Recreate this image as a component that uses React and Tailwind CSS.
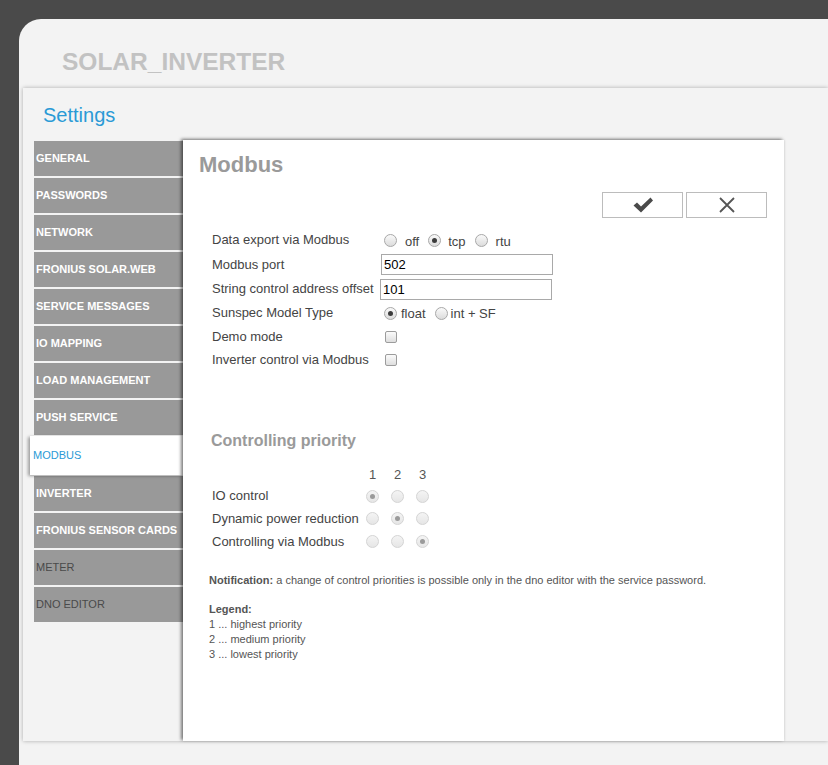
import React from 'react';

const menu = [
  { label: 'GENERAL' },
  { label: 'PASSWORDS' },
  { label: 'NETWORK' },
  { label: 'FRONIUS SOLAR.WEB' },
  { label: 'SERVICE MESSAGES' },
  { label: 'IO MAPPING' },
  { label: 'LOAD MANAGEMENT' },
  { label: 'PUSH SERVICE' },
  { label: 'MODBUS', active: true },
  { label: 'INVERTER' },
  { label: 'FRONIUS SENSOR CARDS' },
  { label: 'METER', plain: true },
  { label: 'DNO EDITOR', plain: true },
];

const Radio = ({ checked, disabled, className = '' }) => (
  <span
    className={`inline-flex items-center justify-center w-[13px] h-[13px] rounded-full border shrink-0 ${
      disabled
        ? 'border-[#d4d4d4] bg-gradient-to-b from-[#f4f4f4] to-[#e6e6e6]'
        : 'border-[#a8a8a8] bg-gradient-to-b from-[#fafafa] to-[#dcdcdc]'
    } ${className}`}
  >
    {checked && (
      <span className={`w-[5px] h-[5px] rounded-full ${disabled ? 'bg-[#9a9a9a]' : 'bg-[#3c3c3c]'}`} />
    )}
  </span>
);

const Checkbox = () => (
  <span className="inline-block w-[12px] h-[12px] ml-[5px] rounded-[2px] border border-[#9c9c9c] bg-gradient-to-b from-[#fbfbfb] to-[#dedede]" />
);

const Row = ({ label, h, children }) => (
  <div className={`flex items-center ${h}`}>
    <div className="w-[168px] shrink-0">{label}</div>
    <div className="flex items-center">{children}</div>
  </div>
);

const PrioRow = ({ label, sel, h }) => (
  <div className={`flex items-center ${h}`}>
    <div className="w-[148px] shrink-0">{label}</div>
    {[1, 2, 3].map((n) => (
      <div key={n} className="w-[25px] flex justify-center">
        <Radio disabled checked={n === sel} />
      </div>
    ))}
  </div>
);

export default function App() {
  return (
    <div
      className="h-[765px] overflow-hidden bg-[#4a4a4a] pl-[19px] pt-[19px]"
      style={{ fontFamily: '"Liberation Sans", Arial, sans-serif' }}
    >
      <div className="h-full bg-[#f3f3f3] rounded-tl-[22px]">
        {/* header */}
        <div className="h-[69px] pt-[29px] pl-[43px]">
          <div className="text-[24.5px] leading-[28px] font-bold text-[#c2c2c2]">SOLAR_INVERTER</div>
        </div>

        {/* main panel */}
        <div className="ml-[4px] h-[653px] bg-[#f3f3f3] shadow-[0_0_4px_rgba(0,0,0,0.3)] pt-[15px]">
          <div className="pl-[20px] text-[20px] leading-[24px] text-[#2a9ad6]">Settings</div>

          <div className="flex mt-[13px] pl-[11px]">
            {/* sidebar */}
            <div className="w-[149px] shrink-0 pt-[1px] flex flex-col">
              {menu.map((m) =>
                m.active ? (
                  <div
                    key={m.label}
                    className="h-[39px] -ml-[4px] -mt-[1px] mb-[1px] pl-[3px] flex items-center bg-white text-[11px] text-[#2a9ad6] shadow-[-2px_1px_3px_rgba(0,0,0,0.35)] relative z-10"
                  >
                    {m.label}
                  </div>
                ) : (
                  <div
                    key={m.label}
                    className={`h-[35px] mb-[2px] pl-[2px] flex items-center bg-[#999999] text-[11px] ${
                      m.plain ? 'text-[#4a4a4a]' : 'text-white font-bold'
                    }`}
                  >
                    {m.label}
                  </div>
                )
              )}
            </div>

            {/* content */}
            <div className="w-[601px] h-[601px] bg-white shadow-[-2px_-1px_3px_rgba(0,0,0,0.5),1px_0_2px_rgba(0,0,0,0.08)] relative z-20">
              <div className="pt-[12px] pl-[16px] text-[22px] leading-[26px] font-bold text-[#9a9a9a]">Modbus</div>

              <div className="flex justify-end gap-[3px] pr-[17px] mt-[14px]">
                <button className="w-[81px] h-[26px] border border-[#bcbcbc] bg-white flex items-center justify-center">
                  <svg width="22" height="18" viewBox="0 0 22 18">
                    <path d="M1.5 9.5 L5 6.5 L9 10.5 L18.5 1.5 L21 4.5 L9 16.5 Z" fill="#4a4a4a" />
                  </svg>
                </button>
                <button className="w-[81px] h-[26px] border border-[#bcbcbc] bg-white flex items-center justify-center">
                  <svg width="18" height="18" viewBox="0 0 18 18">
                    <path d="M2 2 L16 16 M16 2 L2 16" stroke="#555" strokeWidth="1.8" />
                  </svg>
                </button>
              </div>

              {/* form */}
              <div className="mt-[10px] pl-[29px] text-[13px] text-[#444]">
                <Row label="Data export via Modbus" h="h-[24px]">
                  <Radio className="ml-[4px]" />
                  <span className="ml-[8px] pt-[3px]">off</span>
                  <Radio checked className="ml-[9px]" />
                  <span className="ml-[7px] pt-[3px]">tcp</span>
                  <Radio className="ml-[9px]" />
                  <span className="ml-[8px] pt-[3px]">rtu</span>
                </Row>
                <Row label="Modbus port" h="h-[25px]">
                  <input
                    readOnly
                    value="502"
                    className="w-[172px] h-[21px] ml-[1px] border border-[#a9a9a9] px-[2px] text-[13px] text-black outline-none"
                  />
                </Row>
                <Row label="String control address offset" h="h-[24px]">
                  <input
                    readOnly
                    value="101"
                    className="w-[172px] h-[21px] border border-[#a9a9a9] px-[2px] text-[13px] text-black outline-none"
                  />
                </Row>
                <Row label="Sunspec Model Type" h="h-[24px]">
                  <Radio checked className="ml-[4px]" />
                  <span className="ml-[4px] pt-[2px]">float</span>
                  <Radio className="ml-[9px]" />
                  <span className="ml-[3px] pt-[2px]">int + SF</span>
                </Row>
                <Row label="Demo mode" h="h-[23px]">
                  <Checkbox />
                </Row>
                <Row label="Inverter control via Modbus" h="h-[23px]">
                  <Checkbox />
                </Row>
              </div>

              {/* priority */}
              <div className="mt-[60px] pl-[28px] text-[16px] leading-[20px] font-bold text-[#9a9a9a]">
                Controlling priority
              </div>
              <div className="mt-[14px] pl-[29px] text-[13px] text-[#555]">
                <div className="flex h-[20px] items-center">
                  <div className="w-[148px]" />
                  <div className="w-[25px] text-center">1</div>
                  <div className="w-[25px] text-center">2</div>
                  <div className="w-[25px] text-center">3</div>
                </div>
                <div className="text-[#444]">
                  <PrioRow label="IO control" sel={1} h="h-[22px]" />
                  <PrioRow label="Dynamic power reduction" sel={2} h="h-[23px]" />
                  <PrioRow label="Controlling via Modbus" sel={3} h="h-[23px]" />
                </div>
              </div>

              <div className="mt-[20px] pl-[26px] text-[11px] leading-[15px] text-[#555]">
                <p>
                  <span className="font-bold">Notification:</span> a change of control priorities is possible only in the dno editor with the service password.
                </p>
                <p className="mt-[14px] font-bold">Legend:</p>
                <p>1 ... highest priority</p>
                <p>2 ... medium priority</p>
                <p>3 ... lowest priority</p>
              </div>
            </div>
          </div>
        </div>
      </div>
    </div>
  );
}
